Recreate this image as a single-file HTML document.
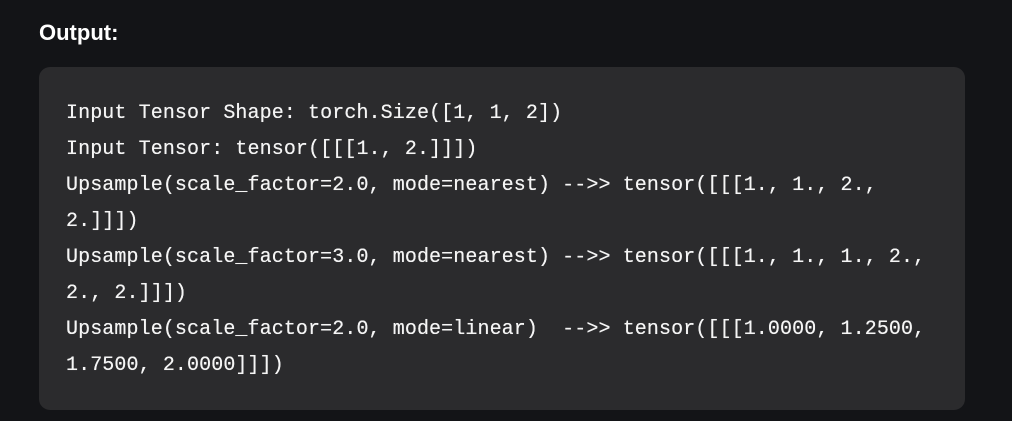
<!DOCTYPE html>
<html><head><style>
html,body{margin:0;padding:0;width:1012px;height:421px;background:#131417;overflow:hidden}
.t{position:absolute;left:39px;top:20px;font:bold 22px "Liberation Sans",sans-serif;color:#fff}
.b{position:absolute;left:39px;top:67px;width:926px;height:343px;background:#2b2b2d;border-radius:11px}
pre{position:absolute;left:66px;top:96px;margin:0;font:20px/36px "Liberation Mono",monospace;color:#f5f5f5;letter-spacing:0.1px;text-shadow:0 0 0.4px #fff}
</style></head><body>
<div class="t">Output:</div>
<div class="b"></div>
<pre>Input Tensor Shape: torch.Size([1, 1, 2])
Input Tensor: tensor([[[1., 2.]]])
Upsample(scale_factor=2.0, mode=nearest) -->> tensor([[[1., 1., 2.,
2.]]])
Upsample(scale_factor=3.0, mode=nearest) -->> tensor([[[1., 1., 1., 2.,
2., 2.]]])
Upsample(scale_factor=2.0, mode=linear)  -->> tensor([[[1.0000, 1.2500,
1.7500, 2.0000]]])</pre>
</body></html>
